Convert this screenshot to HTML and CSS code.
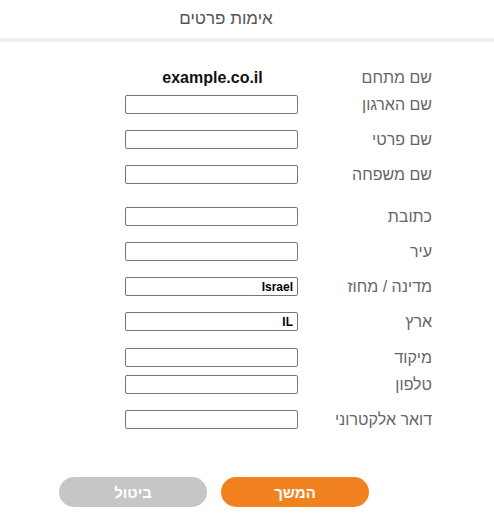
FILE: index.html
```html
<!DOCTYPE html>
<html lang="he" dir="rtl">
<head>
<meta charset="utf-8">
<title>אימות פרטים</title>
<link rel="stylesheet" href="styles.css">
</head>
<body>
<header class="header">
  <h1 class="title">אימות פרטים</h1>
</header>
<form class="form">
  <div class="row row-domain">
    <span class="label">שם מתחם</span>
    <span class="value domain">example.co.il</span>
  </div>
  <div class="row row-tight">
    <label class="label" for="org">שם הארגון</label>
    <span class="value"><input class="field" id="org" type="text"></span>
  </div>
  <div class="row">
    <label class="label" for="first">שם פרטי</label>
    <span class="value"><input class="field" id="first" type="text"></span>
  </div>
  <div class="row">
    <label class="label" for="last">שם משפחה</label>
    <span class="value"><input class="field" id="last" type="text"></span>
  </div>
  <div class="row row-wide">
    <label class="label" for="addr">כתובת</label>
    <span class="value"><input class="field" id="addr" type="text"></span>
  </div>
  <div class="row">
    <label class="label" for="city">עיר</label>
    <span class="value"><input class="field" id="city" type="text"></span>
  </div>
  <div class="row">
    <label class="label" for="state">מדינה / מחוז</label>
    <span class="value"><input class="field" id="state" type="text" value="Israel"></span>
  </div>
  <div class="row">
    <label class="label" for="country">ארץ</label>
    <span class="value"><input class="field" id="country" type="text" value="IL"></span>
  </div>
  <div class="row row-zip">
    <label class="label" for="zip">מיקוד</label>
    <span class="value"><input class="field" id="zip" type="text"></span>
  </div>
  <div class="row row-tight">
    <label class="label" for="phone">טלפון</label>
    <span class="value"><input class="field" id="phone" type="text"></span>
  </div>
  <div class="row">
    <label class="label" for="email">דואר אלקטרוני</label>
    <span class="value"><input class="field" id="email" type="text"></span>
  </div>
  <div class="actions">
    <button class="btn btn-primary" type="button">המשך</button>
    <button class="btn btn-secondary" type="button">ביטול</button>
  </div>
</form>
</body>
</html>
```

FILE: styles.css
```css
html, body {
  margin: 0;
  padding: 0;
  background: #ffffff;
}

body {
  font-family: "Liberation Sans", Arial, sans-serif;
  direction: rtl;
}

.header {
  height: 38px;
  border-bottom: 4px solid #f0f0f0;
  display: flex;
  align-items: center;
  justify-content: center;
  padding-right: 42px;
}

.title {
  margin: 0;
  font-size: 17px;
  font-weight: normal;
  color: #555555;
  line-height: 20px;
  padding-top: 0;
}

.form {
  padding-top: 26px;
  padding-right: 62px;
  margin: 0;
}

.row {
  display: grid;
  grid-template-columns: 134px 173px;
  height: 19px;
  align-items: center;
  margin-top: 16px;
}

.row-domain {
  margin-top: 0;
}

.row-tight {
  margin-top: 8px;
}

.row-wide {
  margin-top: 23px;
}

.row-zip {
  margin-top: 17px;
}

.label {
  font-size: 16px;
  color: #666666;
  line-height: 19px;
  white-space: nowrap;
}

.value {
  display: flex;
  justify-content: center;
  height: 19px;
  align-items: center;
}

.domain {
  font-weight: bold;
  font-size: 16px;
  color: #111111;
  direction: ltr;
  padding-left: 2px;
}

.field {
  box-sizing: border-box;
  width: 173px;
  height: 19px;
  margin: 0;
  border: 1px solid #767676;
  border-radius: 2px;
  padding: 0 4px;
  font-family: "Liberation Sans", Arial, sans-serif;
  font-size: 12px;
  font-weight: bold;
  color: #000000;
  text-align: right;
  background: #ffffff;
}

.actions {
  display: flex;
  gap: 14px;
  margin-top: 48px;
  padding-right: 63px;
}

.btn {
  width: 148px;
  height: 30px;
  border: none;
  border-radius: 15px;
  font-family: "Liberation Sans", Arial, sans-serif;
  font-size: 15px;
  font-weight: bold;
  color: #ffffff;
  cursor: pointer;
  padding: 0;
}

.btn-primary {
  background: #f28220;
}

.btn-secondary {
  background: #c6c6c6;
}
```
